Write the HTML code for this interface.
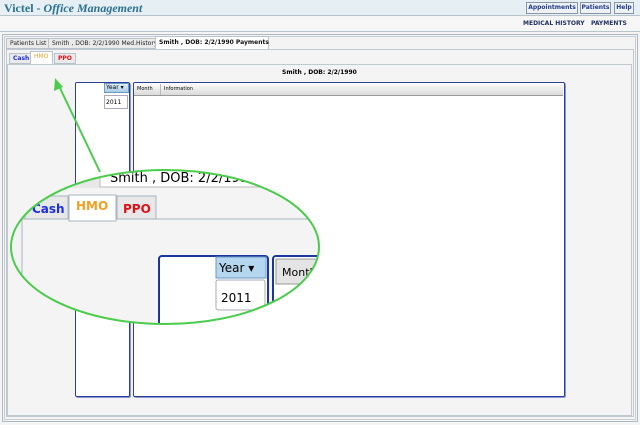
<!DOCTYPE html>
<html><head><style>
*{margin:0;padding:0;box-sizing:border-box}
body{width:640px;height:425px;background:#f4f4f4;font-family:"DejaVu Sans","Liberation Sans",sans-serif;position:relative;overflow:hidden}
.a{position:absolute}
.hdr{left:0;top:0;width:640px;height:16px;background:#e6eff4;border-bottom:1px solid #b8c4cc}
.title{left:4px;top:1px;font:bold 12px "Liberation Serif",serif;color:#2a7090;white-space:nowrap}
.btn{top:2px;height:12px;border:1px solid #8a96a4;background:#eef2f6;font-size:6px;font-weight:bold;color:#203a8a;line-height:10px;text-align:center}
.nav{left:0;top:17px;width:640px;height:15px;background:#f6f6f6;border-bottom:1px solid #b8c4cc}
.nav span{position:absolute;top:3px;font-size:6px;font-weight:bold;color:#203060}
.tab{height:11px;font-size:6px;line-height:10px;padding:0 3px;border:1px solid #b9c2cc;background:#eaeaea;color:#222;white-space:nowrap}
.box{border:1px solid #2a3f9e;border-radius:2px;background:#fff;box-shadow:1px 1px 0 #8898cc}
</style></head><body>
<div class="a hdr"></div>
<div class="a title">Victel - <i>Office Management</i></div>
<div class="a btn" style="left:526px;width:52px">Appointments</div>
<div class="a btn" style="left:580px;width:31px">Patients</div>
<div class="a btn" style="left:614px;width:20px">Help</div>
<div class="a nav"><span style="left:523px">MEDICAL HISTORY</span><span style="left:591px">PAYMENTS</span></div>
<div class="a" style="left:2px;top:34px;width:636px;height:388px;border:1px solid #b0bac4;background:#f4f4f4"></div>
<div class="a" style="left:4px;top:36px;width:632px;height:384px;border:1px solid #c8ced4"></div>
<div class="a tab" style="left:6px;top:38px">Patients List</div>
<div class="a tab" style="left:48px;top:38px">Smith , DOB: 2/2/1990 Med.History</div>
<div class="a tab" style="left:155px;top:36px;height:13px;background:#fff;font-weight:bold;color:#111;border-bottom:none;line-height:11px;width:114px">Smith , DOB: 2/2/1990 Payments</div>
<div class="a" style="left:6px;top:49px;width:628px;height:368px;border:1px solid #c0c8d0"></div>
<div class="a tab" style="left:9px;top:53px;color:#1a2ee0;font-weight:bold">Cash</div>
<div class="a tab" style="left:30px;top:51px;height:13px;background:#fff;color:#f0a020;border-bottom:none;width:23px">HMO</div>
<div class="a tab" style="left:54px;top:53px;color:#e0101a;font-weight:bold">PPO</div>
<div class="a" style="left:7px;top:64px;width:625px;height:352px;border:1px solid #c0c8d0;background:#f4f4f4"></div>
<div class="a" style="left:282px;top:69px;font-size:6px;font-weight:bold">Smith , DOB: 2/2/1990</div>
<div class="a box" style="left:75px;top:82px;width:55px;height:315px"></div>
<div class="a" style="left:104px;top:83px;width:25px;height:10px;background:linear-gradient(#dfeef8,#a8cce6);border:1px solid #6a9ac4;font-size:6px;padding-left:1px">Year ▾</div>
<div class="a" style="left:104px;top:95px;width:24px;height:14px;border:1px solid #aab;background:#fff;font-size:6px;padding:3px 1px">2011</div>
<div class="a box" style="left:133px;top:82px;width:432px;height:315px"></div>
<div class="a" style="left:134px;top:84px;width:429px;height:12px;background:linear-gradient(#fafafa,#dadada);border-bottom:1px solid #999;font-size:5px;line-height:11px"><span style="position:absolute;left:3px">Month</span><span style="position:absolute;left:26px;top:0;height:11px;border-left:1px solid #bbb;padding-left:3px">Information</span></div>
<svg class="a" style="left:0;top:0" width="640" height="425">
<defs><clipPath id="c"><ellipse cx="165" cy="247" rx="154" ry="77"/></clipPath></defs>
<g clip-path="url(#c)">
<rect x="0" y="160" width="330" height="170" fill="#f4f4f4"/>
<rect x="0" y="160" width="100" height="28" fill="#e8e8e8"/>
<rect x="100" y="163" width="230" height="24" fill="#fff" stroke="#bbb"/>
<text x="110" y="182" font-family="DejaVu Sans,sans-serif" font-size="13">Smith , DOB: 2/2/1990</text>
<line x1="0" y1="219" x2="330" y2="219" stroke="#a8b4c0"/>
<line x1="22" y1="190" x2="22" y2="330" stroke="#a8b4c0"/>
<rect x="25" y="196" width="43" height="23" fill="#e8e8e8" stroke="#a8b4c0"/>
<text x="32" y="213" font-family="DejaVu Sans,sans-serif" font-size="12" font-weight="bold" fill="#1a2ee0">Cash</text>
<rect x="69" y="195" width="47" height="26" fill="#fff" stroke="#a8b4c0"/>
<text x="76" y="210" font-family="DejaVu Sans,sans-serif" font-size="12" font-weight="bold" fill="#f5a020">HMO</text>
<rect x="117" y="196" width="39" height="23" fill="#e8e8e8" stroke="#a8b4c0"/>
<text x="123" y="213" font-family="DejaVu Sans,sans-serif" font-size="12" font-weight="bold" fill="#e01018">PPO</text>
<rect x="159" y="256" width="109" height="80" rx="3" fill="#fff" stroke="#1a36a0" stroke-width="2"/>
<rect x="216" y="257" width="50" height="21" fill="#b4d6ee" stroke="#6a9ac4"/>
<text x="219" y="272" font-family="DejaVu Sans,sans-serif" font-size="12">Year ▾</text>
<rect x="216" y="280" width="49" height="30" rx="2" fill="#fff" stroke="#aab"/>
<text x="221" y="302" font-family="DejaVu Sans,sans-serif" font-size="12">2011</text>
<rect x="273" y="256" width="60" height="80" rx="3" fill="#fff" stroke="#1a36a0" stroke-width="2"/>
<rect x="276" y="259" width="50" height="25" fill="#e4e4e4" stroke="#999"/>
<text x="282" y="276" font-family="DejaVu Sans,sans-serif" font-size="11">Month</text>
</g>
<ellipse cx="165" cy="247" rx="154" ry="77" fill="none" stroke="#4ccc4c" stroke-width="2"/>
<line x1="100" y1="172" x2="59" y2="86" stroke="#4ccc4c" stroke-width="2"/>
<polygon points="55,78 54,91 63,87" fill="#4ccc4c"/>
</svg>
</body></html>
